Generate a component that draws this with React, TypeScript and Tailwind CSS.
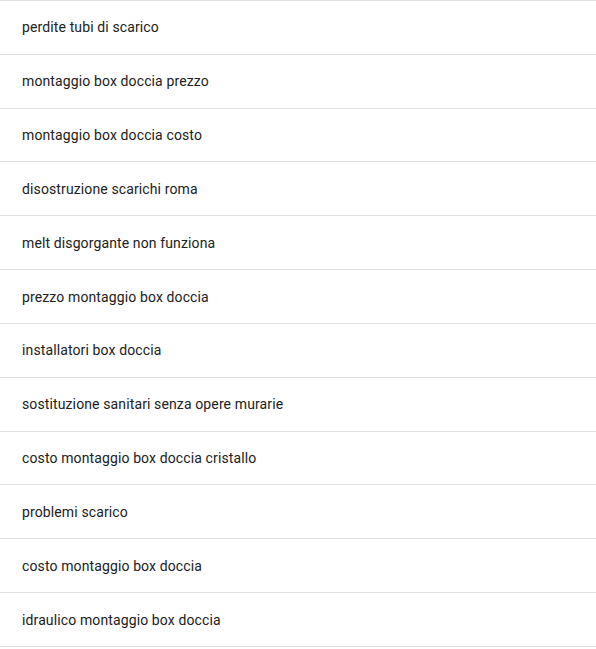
const queries = [
  'perdite tubi di scarico',
  'montaggio box doccia prezzo',
  'montaggio box doccia costo',
  'disostruzione scarichi roma',
  'melt disgorgante non funziona',
  'prezzo montaggio box doccia',
  'installatori box doccia',
  'sostituzione sanitari senza opere murarie',
  'costo montaggio box doccia cristallo',
  'problemi scarico',
  'costo montaggio box doccia',
  'idraulico montaggio box doccia',
]

export default function App() {
  return (
    <div className="min-h-screen bg-white font-['Roboto',sans-serif]">
      <ul className="border-b border-[#e0e0e0]">
        {queries.map((q) => (
          <li
            key={q}
            className="flex h-[53.83px] items-center border-t border-[#e0e0e0] pl-[22px] pt-px text-[14px] tracking-[0.12px] text-[#212121]"
          >
            {q}
          </li>
        ))}
      </ul>
    </div>
  )
}
